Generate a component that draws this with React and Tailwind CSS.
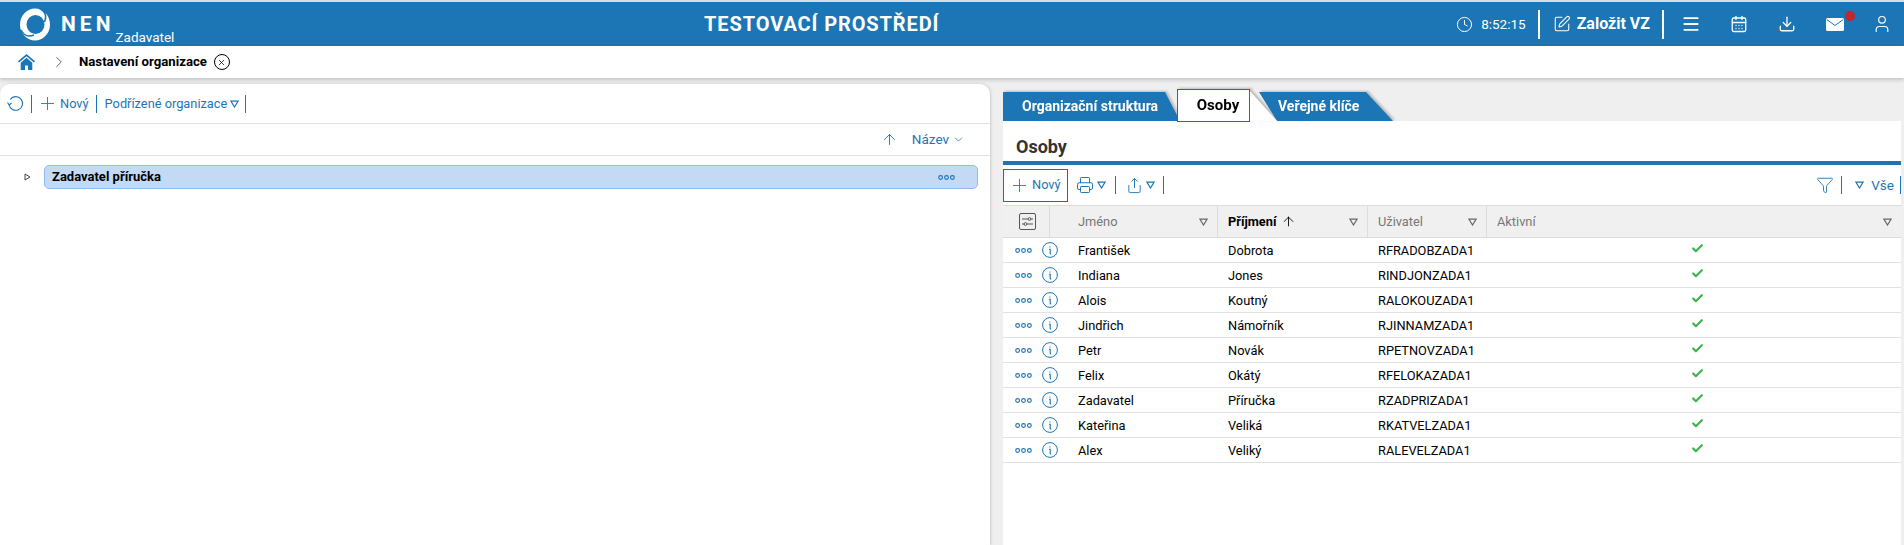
import React from "react";
import { Plus, Clock, SquarePen, Menu, Download, User, ChevronRight, ChevronDown, ArrowUp, Funnel, Printer, Share, Check, X, CalendarDays } from "lucide-react";

const people = [
  ["František", "Dobrota", "RFRADOBZADA1"],
  ["Indiana", "Jones", "RINDJONZADA1"],
  ["Alois", "Koutný", "RALOKOUZADA1"],
  ["Jindřich", "Námořník", "RJINNAMZADA1"],
  ["Petr", "Novák", "RPETNOVZADA1"],
  ["Felix", "Okátý", "RFELOKAZADA1"],
  ["Zadavatel", "Příručka", "RZADPRIZADA1"],
  ["Kateřina", "Veliká", "RKATVELZADA1"],
  ["Alex", "Veliký", "RALEVELZADA1"],
];

function Triangle({ className = "text-[#1c75b4]" }) {
  return (
    <svg width="9" height="8" viewBox="0 0 9 8" className={className} fill="none" stroke="currentColor" strokeWidth="1.2">
      <path d="M1 1.2h7L4.5 7z" />
    </svg>
  );
}

function Dots() {
  return (
    <svg width="17" height="5" viewBox="0 0 17 5" className="shrink-0" fill="none" stroke="#1c75b4" strokeWidth="1.1">
      <circle cx="2.6" cy="2.5" r="1.9" />
      <circle cx="8.5" cy="2.5" r="1.9" />
      <circle cx="14.4" cy="2.5" r="1.9" />
    </svg>
  );
}

function InfoIcon() {
  return (
    <svg width="16" height="16" viewBox="0 0 16 16" fill="none" stroke="#1c75b4" strokeWidth="1">
      <circle cx="8" cy="8" r="7.4" />
      <path d="M7 7.2h1.2v4.2c0 .5.4.6 1 .4M7.9 4.4v1" strokeWidth="1.1" />
    </svg>
  );
}

// ring with two curved cuts, inner circle sits off centre
function Logo() {
  return (
    <svg width="30" height="33" viewBox="0 0 30 33" className="shrink-0">
      <path
        fillRule="evenodd"
        fill="white"
        d="M15 .5a15 16 0 1 0 0 32a15 16 0 1 0 0-32zM15.500 7a9 9.500 0 1 1 0 19a9 9.500 0 1 1 0-19z"
      />
      <path d="M19 0c6 3 8 8 5.500 14" fill="none" stroke="#1c75b4" strokeWidth="1.6" />
      <path d="M1 22c3 6 8 7 13 5" fill="none" stroke="#1c75b4" strokeWidth="1.6" />
    </svg>
  );
}

function HomeIcon() {
  return (
    <svg width="17" height="16" viewBox="0 0 17 16" fill="#1c75b4">
      <path d="M8.500 0L17 7.200l-1.100 1.300L8.500 2.300 1.100 8.500 0 7.200z" />
      <path d="M8.500 3.800l5.800 4.900V16H10v-4.500H7V16H2.700V8.700z" />
    </svg>
  );
}

function MailIcon() {
  return (
    <svg width="18" height="13" viewBox="0 0 18 13">
      <rect width="18" height="13" rx="1.500" fill="white" />
      <path d="M.8 1.500L9 7.500l8.200-6" fill="none" stroke="#1c75b4" strokeWidth="1" />
    </svg>
  );
}

function RefreshIcon() {
  return (
    <svg width="17" height="17" viewBox="0 0 17 17" fill="none" stroke="#1c75b4" strokeWidth="1.1">
      <path d="M3.200 4.500A6.800 6.800 0 1 1 2 9.500" />
      <path d="M.5 7.500L2.200 10l2.300-2" />
    </svg>
  );
}

function ColumnsIcon() {
  return (
    <svg width="17" height="17" viewBox="0 0 17 17" fill="none" stroke="#555" strokeWidth="1">
      <rect x=".5" y=".5" width="16" height="16" rx="1.500" />
      <path d="M3 6h6M12 6h2M3 11h2M8 11h6" />
      <circle cx="10.500" cy="6" r="1.400" />
      <circle cx="6.500" cy="11" r="1.400" />
    </svg>
  );
}

function Header() {
  return (
    <header className="h-[44px] bg-[#1c75b4] text-white flex items-center">
      <div className="w-[695px] shrink-0 pl-[20px] flex items-start h-full pt-[6px]">
        <Logo />
        <span className="ml-[11px] mt-[3px] text-[21px] leading-[26px] font-bold tracking-[4px]">NEN</span>
        <span className="ml-[1px] mt-[21px] text-[13.5px] leading-[16px]">Zadavatel</span>
      </div>
      <div className="w-[255px] shrink-0 pl-[9px] text-[20px] font-bold tracking-[0.9px] whitespace-nowrap">TESTOVACÍ PROSTŘEDÍ</div>
      <div className="flex-1 flex items-center justify-end h-full pr-[12px]">
        <Clock size={17} strokeWidth={1.4} />
        <span className="ml-[8px] text-[13.5px]">8:52:15</span>
        <span className="ml-[12px] w-[2px] h-[29px] bg-white" />
        <SquarePen size={18} strokeWidth={1.4} className="ml-[13px]" />
        <span className="ml-[6px] text-[16px] font-bold">Založit VZ</span>
        <span className="ml-[12px] w-[2px] h-[29px] bg-white" />
        <Menu size={20} strokeWidth={2.2} className="ml-[17px]" />
        <CalendarDays size={18} strokeWidth={1.7} className="ml-[29px]" />
        <Download size={18} strokeWidth={1.7} className="ml-[30px]" />
        <div className="relative ml-[30px]">
          <MailIcon />
          <span className="absolute -top-[7px] -right-[11px] w-[10px] h-[10px] rounded-full bg-[#c5252c]" />
        </div>
        <User size={20} strokeWidth={1.4} className="ml-[28px]" />
      </div>
    </header>
  );
}

function Breadcrumb() {
  return (
    <div className="h-[32px] bg-white flex items-center pl-[18px] shadow-[0_2px_4px_rgba(0,0,0,0.18)] relative">
      <HomeIcon />
      <ChevronRight size={18} strokeWidth={1.2} className="ml-[15px] text-gray-600" />
      <span className="ml-[11px] text-[13.2px] font-bold text-black">Nastavení organizace</span>
      <span className="ml-[7px] w-[16px] h-[16px] rounded-full border border-black flex items-center justify-center">
        <X size={9} strokeWidth={2} />
      </span>
    </div>
  );
}

function LeftPanel() {
  return (
    <section className="w-[990px] shrink-0 mt-[6px] bg-white rounded-t-[10px] shadow-[1px_0_3px_rgba(0,0,0,0.15)] text-[#1c75b4] text-[12.8px]">
      <div className="h-[40px] border-b border-[#e2e2e2] flex items-center pl-[7px]">
        <RefreshIcon />
        <span className="ml-[7px] w-px h-[18px] bg-[#1c75b4]" />
        <Plus size={21} strokeWidth={1} className="ml-[5px]" />
        <span className="ml-[2px]">Nový</span>
        <span className="ml-[7px] w-px h-[18px] bg-[#1c75b4]" />
        <span className="ml-[8px]">Podřízené organizace</span>
        <span className="ml-[3px]"><Triangle /></span>
        <span className="ml-[6px] w-px h-[18px] bg-[#1c75b4]" />
      </div>
      <div className="h-[32px] border-b border-[#e2e2e2] flex items-center justify-end pr-[25px]">
        <ArrowUp size={17} strokeWidth={1.3} />
        <span className="ml-[14px] text-[13.5px]">Název</span>
        <ChevronDown size={13} strokeWidth={1.4} className="ml-[3px]" />
      </div>
      <div className="pt-[9px] pl-[24px] pr-[12px] flex items-center">
        <svg width="7" height="8" viewBox="0 0 7 8" fill="none" stroke="#444" strokeWidth="1"><path d="M1 1l5 3-5 3z" /></svg>
        <div className="ml-[13px] flex-1 h-[24px] bg-[#c3d9f4] border border-[#94bcea] rounded-[5px] flex items-center justify-between pl-[7px] pr-[22px]">
          <span className="text-[13px] font-bold text-black">Zadavatel příručka</span>
          <Dots />
        </div>
      </div>
    </section>
  );
}

function Tabs() {
  return (
    <div className="h-[29px] flex items-end text-[14px] font-bold drop-shadow-[2px_-1px_1px_rgba(0,0,0,0.22)]">
      <div className="w-[177px] h-[29px] bg-[#1c75b4] text-white flex items-center pl-[19px] whitespace-nowrap [clip-path:polygon(0_0,162px_0,100%_100%,0_100%)]">Organizační struktura</div>
      <div className="relative z-10 -ml-[3px] -mb-[1px] w-[73px] h-[33px] bg-white border border-[#e3202c] text-black flex items-center justify-center text-[15px] pl-[9px]">
        Osoby
        <span className="absolute left-[calc(100%+1px)] bottom-0 w-[27px] h-[30px] bg-white [clip-path:polygon(0_0,100%_100%,0_100%)]" />
      </div>
      <div className="w-[134px] h-[29px] ml-[9px] bg-[#1c75b4] text-white flex items-center pl-[19px] whitespace-nowrap [clip-path:polygon(0_0,107px_0,100%_100%,18px_100%)]">Veřejné klíče</div>
    </div>
  );
}

function HeaderCell({ label, className, bold }) {
  return (
    <div className={`flex items-center justify-between pr-[9px] border-r border-[#dcdcdc] ${className}`}>
      <span className={bold ? "flex items-center font-bold text-black" : "text-[#777]"}>
        {label}
        {bold && <ArrowUp size={15} strokeWidth={1.4} className="ml-[5px]" />}
      </span>
      <Triangle className="text-[#666]" />
    </div>
  );
}

function PeopleTable() {
  return (
    <div className="text-[12.8px]">
      <div className="h-[33px] flex bg-[#f0f0f0] border-y border-[#dcdcdc]">
        <div className="w-[47px] shrink-0 flex items-center justify-center pl-[2px] border-r border-[#dcdcdc]">
          <ColumnsIcon />
        </div>
        <HeaderCell label="Jméno" className="w-[168px] pl-[28px]" />
        <HeaderCell label="Příjmení" className="w-[150px] pl-[10px]" bold />
        <HeaderCell label="Uživatel" className="w-[119px] pl-[10px]" />
        <HeaderCell label="Aktivní" className="flex-1 pl-[10px] border-r-0" />
      </div>
      {people.map(([first, last, user]) => (
        <div key={user} className="h-[25px] flex items-center border-b border-[#e2e2e2] text-black">
          <div className="w-[47px] shrink-0 flex items-center pl-[12px]">
            <Dots />
            <span className="ml-[10px] shrink-0"><InfoIcon /></span>
          </div>
          <div className="w-[168px] pl-[28px] pt-px">{first}</div>
          <div className="w-[150px] pl-[10px] pt-px">{last}</div>
          <div className="w-[119px] pl-[10px] pt-px whitespace-nowrap">{user}</div>
          <div className="flex-1 pl-[204px]">
            <Check size={13} strokeWidth={4} className="text-[#3bb54a] -mt-[3px]" />
          </div>
        </div>
      ))}
    </div>
  );
}

function RightPanel() {
  return (
    <section className="flex-1 min-w-0 pt-[14px] pl-[13px] pr-[3px] flex flex-col">
      <Tabs />
      <div className="flex-1 bg-white">
        <div className="h-[44px] pl-[13px] pt-[15px] border-b-[4px] border-[#1c75b4] text-[18px] leading-[22px] font-bold text-[#333]">Osoby</div>
        <div className="h-[40px] flex items-center text-[12.8px] text-[#1c75b4]">
          <div className="relative z-10 w-[65px] h-[33px] border border-[#e3202c] flex items-center pl-[5px]">
            <Plus size={21} strokeWidth={1} />
            <span className="ml-[2px]">Nový</span>
          </div>
          <Printer size={18} strokeWidth={1.3} className="ml-[8px]" />
          <span className="ml-[3px]"><Triangle /></span>
          <span className="ml-[9px] w-px h-[18px] bg-[#1c75b4]" />
          <Share size={17} strokeWidth={1.3} className="ml-[10px]" />
          <span className="ml-[3px]"><Triangle /></span>
          <span className="ml-[8px] w-px h-[18px] bg-[#1c75b4]" />
          <div className="flex-1" />
          <Funnel size={18} strokeWidth={1.2} />
          <span className="ml-[7px] w-px h-[18px] bg-[#1c75b4]" />
          <span className="ml-[13px]"><Triangle /></span>
          <span className="ml-[7px] text-[13.5px]">Vše</span>
          <span className="ml-[6px] w-px h-[18px] bg-[#1c75b4]" />
        </div>
        <PeopleTable />
      </div>
    </section>
  );
}

export default function App() {
  return (
    <div className="h-[545px] overflow-hidden bg-[#efefef] font-['Roboto',sans-serif] border-t-2 border-[#dcdcdc] flex flex-col">
      <Header />
      <Breadcrumb />
      <main className="flex-1 flex min-h-0">
        <LeftPanel />
        <RightPanel />
      </main>
    </div>
  );
}
